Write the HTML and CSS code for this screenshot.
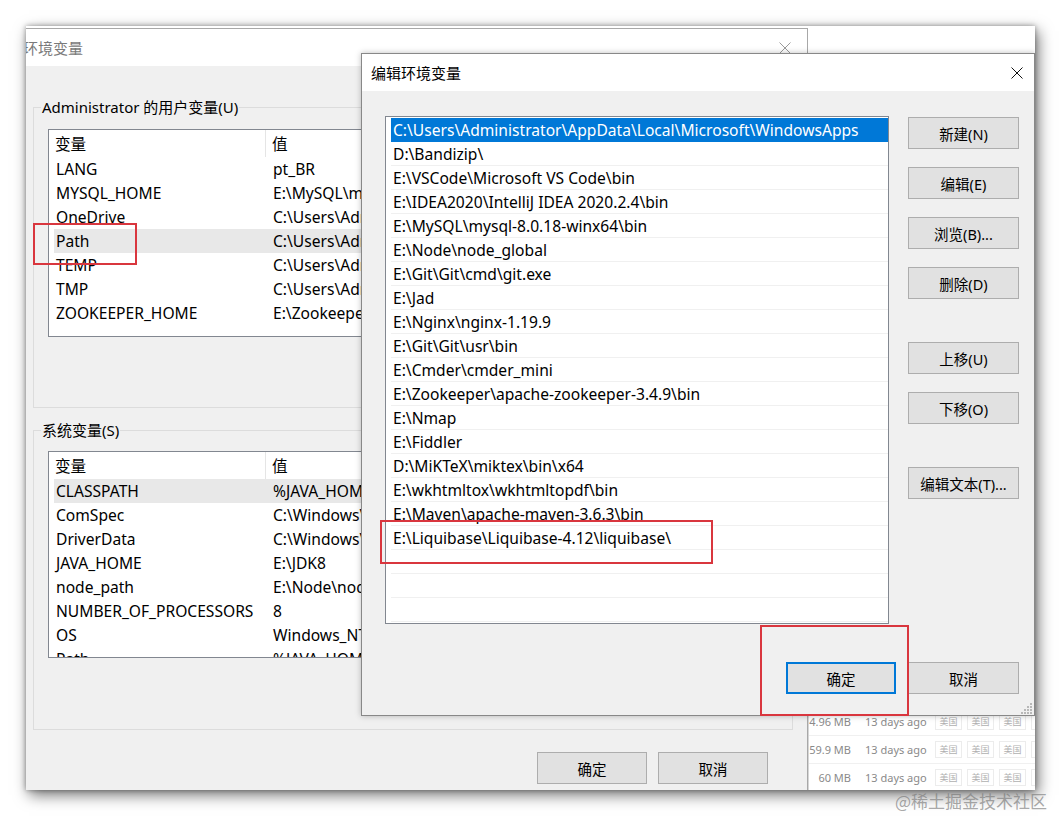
FILE: index.html
```html
<!DOCTYPE html>
<html lang="zh-CN">
<head>
  <meta charset="UTF-8">
  <title>编辑环境变量</title>
  <link rel="stylesheet" href="styles.css">
</head>
<body>
  <div class="shot">

    <!-- 环境变量 (inactive, behind) -->
    <div class="win env">
      <div class="titlebar">
        <span class="title">环境变量</span>
        <svg class="close" width="12" height="12" viewBox="0 0 12 12"><path d="M0.5 0.5 L11.5 11.5 M11.5 0.5 L0.5 11.5" stroke="#9a9a9a" stroke-width="1" fill="none"/></svg>
      </div>
      <div class="env-body">
        <div class="group">
          <div class="group-title">Administrator 的用户变量(U)</div>
          <div class="vars vars-user">
            <div class="vars-head"><span class="c1">变量</span><span class="c2">值</span></div>
            <div class="vars-row"><span class="c1">LANG</span><span class="c2">pt_BR</span></div>
            <div class="vars-row"><span class="c1">MYSQL_HOME</span><span class="c2">E:\MySQL\mysql-8.0.18-winx64</span></div>
            <div class="vars-row"><span class="c1">OneDrive</span><span class="c2">C:\Users\Administrator\OneDrive</span></div>
            <div class="vars-row hover"><span class="c1">Path</span><span class="c2">C:\Users\Administrator\AppData\Local\Microsoft\WindowsApps</span></div>
            <div class="vars-row"><span class="c1">TEMP</span><span class="c2">C:\Users\Administrator\AppData\Local\Temp</span></div>
            <div class="vars-row"><span class="c1">TMP</span><span class="c2">C:\Users\Administrator\AppData\Local\Temp</span></div>
            <div class="vars-row"><span class="c1">ZOOKEEPER_HOME</span><span class="c2">E:\Zookeeper\apache-zookeeper-3.4.9</span></div>
          </div>
        </div>
        <div class="group group-sys">
          <div class="group-title">系统变量(S)</div>
          <div class="vars vars-sys">
            <div class="vars-head"><span class="c1">变量</span><span class="c2">值</span></div>
            <div class="vars-row hover"><span class="c1">CLASSPATH</span><span class="c2">%JAVA_HOME%\lib\dt.jar;%JAVA_HOME%\lib\tools.jar</span></div>
            <div class="vars-row"><span class="c1">ComSpec</span><span class="c2">C:\Windows\system32\cmd.exe</span></div>
            <div class="vars-row"><span class="c1">DriverData</span><span class="c2">C:\Windows\System32\Drivers\DriverData</span></div>
            <div class="vars-row"><span class="c1">JAVA_HOME</span><span class="c2">E:\JDK8</span></div>
            <div class="vars-row"><span class="c1">node_path</span><span class="c2">E:\Node\node_modules</span></div>
            <div class="vars-row"><span class="c1">NUMBER_OF_PROCESSORS</span><span class="c2">8</span></div>
            <div class="vars-row"><span class="c1">OS</span><span class="c2">Windows_NT</span></div>
            <div class="vars-row"><span class="c1">Path</span><span class="c2">%JAVA_HOME%\bin;%JAVA_HOME%\jre\bin</span></div>
          </div>
        </div>
        <div class="env-actions">
          <button class="btn">确定</button>
          <button class="btn">取消</button>
        </div>
      </div>
    </div>

    <!-- download list of another app peeking out under the dialog -->
    <div class="behind">
      <div class="dl-row"><span class="dl-size">4.96 MB</span><span class="dl-time">13 days ago</span><span class="tag">美国</span><span class="tag">美国</span><span class="tag">美国</span><span class="tag">美国</span></div>
      <div class="dl-row"><span class="dl-size">59.9 MB</span><span class="dl-time">13 days ago</span><span class="tag">美国</span><span class="tag">美国</span><span class="tag">美国</span><span class="tag">美国</span></div>
      <div class="dl-row"><span class="dl-size">60 MB</span><span class="dl-time">13 days ago</span><span class="tag">美国</span><span class="tag">美国</span><span class="tag">美国</span><span class="tag">美国</span></div>
    </div>

    <!-- 编辑环境变量 (active) -->
    <div class="win edit">
      <div class="titlebar">
        <span class="title">编辑环境变量</span>
        <svg class="close" width="12" height="12" viewBox="0 0 12 12"><path d="M0.5 0.5 L11.5 11.5 M11.5 0.5 L0.5 11.5" stroke="#111" stroke-width="1" fill="none"/></svg>
      </div>
      <div class="edit-body">
        <div class="paths">
          <div class="path selected">C:\Users\Administrator\AppData\Local\Microsoft\WindowsApps</div>
          <div class="path">D:\Bandizip\</div>
          <div class="path">E:\VSCode\Microsoft VS Code\bin</div>
          <div class="path">E:\IDEA2020\IntelliJ IDEA 2020.2.4\bin</div>
          <div class="path">E:\MySQL\mysql-8.0.18-winx64\bin</div>
          <div class="path">E:\Node\node_global</div>
          <div class="path">E:\Git\Git\cmd\git.exe</div>
          <div class="path">E:\Jad</div>
          <div class="path">E:\Nginx\nginx-1.19.9</div>
          <div class="path">E:\Git\Git\usr\bin</div>
          <div class="path">E:\Cmder\cmder_mini</div>
          <div class="path">E:\Zookeeper\apache-zookeeper-3.4.9\bin</div>
          <div class="path">E:\Nmap</div>
          <div class="path">E:\Fiddler</div>
          <div class="path">D:\MiKTeX\miktex\bin\x64</div>
          <div class="path">E:\wkhtmltox\wkhtmltopdf\bin</div>
          <div class="path">E:\Maven\apache-maven-3.6.3\bin</div>
          <div class="path">E:\Liquibase\Liquibase-4.12\liquibase\</div>
          <div class="path"></div>
          <div class="path"></div>
          <div class="path"></div>
        </div>
        <div class="side">
          <div class="side-group">
            <button class="btn">新建(N)</button>
            <button class="btn">编辑(E)</button>
            <button class="btn">浏览(B)...</button>
            <button class="btn">删除(D)</button>
          </div>
          <div class="side-group">
            <button class="btn">上移(U)</button>
            <button class="btn">下移(O)</button>
          </div>
          <div class="side-group">
            <button class="btn">编辑文本(T)...</button>
          </div>
        </div>
      </div>
      <div class="edit-actions">
        <button class="btn default">确定</button>
        <button class="btn">取消</button>
      </div>
      <svg class="grip" width="12" height="12" viewBox="0 0 12 12" fill="#b8b8b8">
        <rect x="9" y="1" width="2" height="2"/>
        <rect x="6" y="4" width="2" height="2"/><rect x="9" y="4" width="2" height="2"/>
        <rect x="3" y="7" width="2" height="2"/><rect x="6" y="7" width="2" height="2"/><rect x="9" y="7" width="2" height="2"/>
        <rect x="0" y="10" width="2" height="2"/><rect x="3" y="10" width="2" height="2"/><rect x="6" y="10" width="2" height="2"/><rect x="9" y="10" width="2" height="2"/>
      </svg>
    </div>

    <!-- red annotation boxes -->
    <div class="mark mark-path"></div>
    <div class="mark mark-new"></div>
    <div class="mark mark-ok"></div>
  </div>

  <div class="watermark">@稀土掘金技术社区</div>
</body>
</html>
```

FILE: styles.css
```css
* { box-sizing: border-box; }
body { margin: 0; width: 1061px; height: 816px; overflow: hidden; background: #fff; font-family: "Noto Sans", "Noto Sans CJK SC", sans-serif; font-size: 15px; color: #000; }

.shot { position: relative; margin: 26px 0 0 26px; width: 1009px; height: 764px; background: #fff; overflow: hidden; box-shadow: 3px 5px 14px rgba(0,0,0,0.55), 0 0 5px rgba(0,0,0,0.35); }

.win { position: absolute; background: #f0f0f0; }
.titlebar { background: #fff; display: flex; align-items: center; justify-content: space-between; }
.close { display: block; }
.btn { width: 110px; height: 32px; background: #e1e1e1; border: 1px solid #adadad; font-family: "Noto Sans", "Noto Sans CJK SC", sans-serif; font-size: 14.5px; color: #000; padding: 0; }
.btn.default { border: 2px solid #0078d7; }

/* background window */
.env { left: 0; top: 2px; width: 782px; bottom: 0; border-top: 1px solid #a8a8a8; border-right: 1px solid #a8a8a8; }
.env .titlebar { height: 37px; padding-right: 16px; }
.env .title { margin-left: -3px; color: #7a7a7a; font-family: "Noto Sans CJK SC", sans-serif; font-size: 15px; }
.env-body { padding: 41px 14px 0 7px; }
.group { border: 1px solid #dcdcdc; height: 301px; padding-left: 14px; }
.group-sys { margin-top: 22px; height: 300px; }
.group-title { margin: -11px 0 0 -7px; height: 20px; line-height: 20px; padding: 0 1px; width: fit-content; background: #f0f0f0; font-size: 15px; }
.vars { margin-top: 12px; width: 314px; height: 208px; border: 1px solid #828790; background: #fff; overflow: hidden; font-size: 15.6px; }
.vars-sys { margin-top: 11px; height: 207px; }
.vars-head { display: flex; height: 27px; align-items: center; white-space: nowrap; }
.vars-head .c1 { width: 217px; flex: none; padding-left: 6px; height: 100%; display: flex; align-items: center; border-right: 1px solid #e5e5e5; }
.vars-head .c2 { padding-left: 6px; }
.vars-row { display: flex; height: 24px; align-items: center; margin-left: 5px; white-space: nowrap; }
.vars-row .c1 { width: 217px; padding-left: 2px; flex: none; }
.vars-row .c2 { padding-left: 2px; flex: 1; min-width: 0; overflow: hidden; }
.vars-row.hover { background: #e8e8e8; }
.env-actions { display: flex; justify-content: flex-end; gap: 11px; margin-top: 22px; padding-right: 25px; }

/* other app list under the dialog */
.behind { position: absolute; left: 782px; top: 682px; width: 227px; height: 90px; background: #fff; border-left: 1px solid #d6d6d6; font-size: 11px; color: #8a8a8a; }
.dl-row { display: flex; align-items: center; height: 28px; border-bottom: 1px solid #f0f0f0; white-space: nowrap; }
.dl-size { width: 42px; text-align: right; flex: none; }
.dl-time { margin-left: 14px; width: 70px; flex: none; }
.tag { flex: none; width: 27px; margin-right: 5px; border: 1px solid #ececec; text-align: center; font-size: 9px; line-height: 15px; color: #b0b0b0; font-family: "Noto Sans CJK SC", sans-serif; }

/* active dialog */
.edit { left: 335px; top: 27px; width: 674px; height: 663px; border: 1px solid #888; box-shadow: 0 0 6px rgba(0,0,0,0.25); }
.edit .titlebar { height: 37px; padding: 0 11px 0 9px; }
.edit .title { font-family: "Noto Sans CJK SC", sans-serif; font-size: 15px; }
.edit-body { display: flex; gap: 19px; padding: 25px 15px 0 23px; }
.paths { width: 504px; height: 508px; flex: none; border: 1px solid #828790; background: #fff; padding: 1px 0 0 5px; overflow: hidden; font-size: 15.6px; }
.path { height: 24px; line-height: 25px; padding-left: 2px; border-bottom: 1px solid #f0f0f0; white-space: nowrap; overflow: hidden; }
.path.selected { background: #0078d7; color: #fff; border-bottom-color: #0078d7; }
.side { display: flex; flex-direction: column; gap: 43px; padding-top: 1px; }
.side-group { display: flex; flex-direction: column; gap: 18px; }
.side .btn { width: 111px; }
.edit-actions { display: flex; justify-content: flex-end; gap: 12px; margin-top: 38px; padding-right: 15px; }
.edit-actions .btn:last-child { width: 111px; }
.grip { position: absolute; right: 1px; bottom: 1px; }

.mark { position: absolute; border: 2px solid #d9363e; }
.mark-path { left: 7px; top: 197px; width: 104px; height: 42px; }
.mark-new { left: 354px; top: 494px; width: 333px; height: 44px; }
.mark-ok { left: 734px; top: 599px; width: 149px; height: 91px; }

.watermark { position: absolute; left: 895px; top: 788px; font-family: "Noto Sans CJK SC", sans-serif; font-size: 17px; color: rgba(120,120,120,0.65); }
```
